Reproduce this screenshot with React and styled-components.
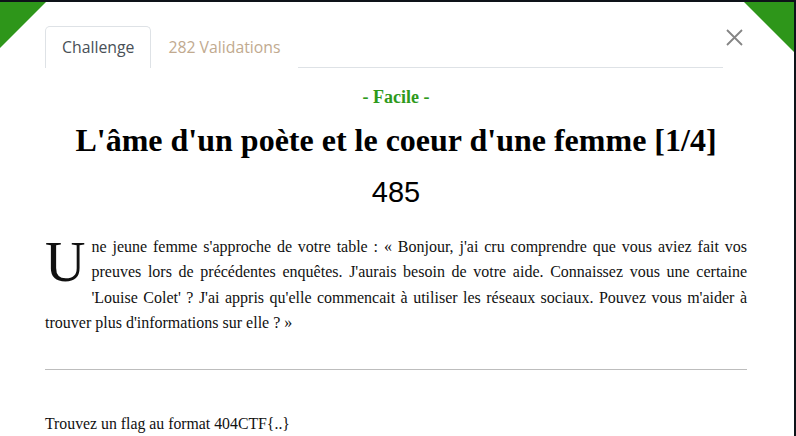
import React from "react";
import styled, { createGlobalStyle } from "styled-components";

const Global = createGlobalStyle`
  html, body { margin: 0; padding: 0; background: #0e1319; height: 436px; overflow: hidden; }
  #root { height: 436px; }
`;

const Modal = styled.div`
  position: relative;
  margin: 2px 2px 0 0;
  height: 434px;
  background: #ffffff;
  overflow: hidden;
  box-sizing: border-box;
  padding: 0 47px 0 45px;
`;

const Corner = styled.div`
  position: absolute;
  top: 0;
  ${(p) => (p.$side === "left" ? "left: 0;" : "right: 0;")}
  width: ${(p) => p.$size}px;
  height: ${(p) => p.$size}px;
  background: #2e961a;
  clip-path: ${(p) =>
    p.$side === "left"
      ? "polygon(0 0, 100% 0, 0 100%)"
      : "polygon(0 0, 100% 0, 100% 100%)"};
`;

const Header = styled.div`
  display: flex;
  align-items: flex-start;
  padding-top: 24px;
`;

const Tabs = styled.div`
  display: flex;
  width: 678px;
  border-bottom: 1px solid #dee2e6;
`;

const Tab = styled.div`
  height: 40px;
  padding: 0 16px;
  display: flex;
  align-items: center;
  font-family: "Open Sans", "DejaVu Sans", sans-serif;
  font-size: 15.8px;
  color: ${(p) => (p.$active ? "#495057" : "#c1aa8f")};
  border: 1px solid ${(p) => (p.$active ? "#dee2e6" : "transparent")};
  border-bottom: none;
  border-radius: 5px 5px 0 0;
  background: #fff;
  margin-bottom: -1px;
  padding-bottom: 1px;
`;

const Close = styled.button`
  margin: 1px 0 0 1px;
  width: 20px;
  height: 20px;
  padding: 0;
  border: none;
  background: none;
  display: flex;
  align-items: center;
  justify-content: center;
`;

const Difficulty = styled.div`
  margin-top: 19px;
  text-align: center;
  font-family: "Liberation Serif", "Times New Roman", serif;
  font-weight: bold;
  font-size: 18px;
  line-height: 20px;
  color: #2e9a1b;
`;

const Title = styled.h1`
  margin: 13px 0 0;
  text-align: center;
  font-family: "Liberation Serif", "Times New Roman", serif;
  font-weight: bold;
  font-size: 32px;
  line-height: 40px;
  color: #000;
`;

const Points = styled.div`
  margin-top: 15px;
  text-align: center;
  font-family: "Liberation Sans", Arial, sans-serif;
  font-size: 29px;
  line-height: 34px;
  color: #000;
`;

const Story = styled.p`
  margin: 25px 0 0;
  font-family: "Liberation Serif", "Times New Roman", serif;
  font-size: 16px;
  line-height: 25.3px;
  text-align: justify;
  color: #111;
`;

const DropCap = styled.span`
  float: left;
  font-size: 56px;
  line-height: 44px;
  margin: 6px 6px 4px 0;
`;

const Divider = styled.hr`
  margin: 34px 0 0;
  border: none;
  border-top: 1px solid #bdbdbd;
`;

const Hint = styled.p`
  margin: 41px 0 0;
  font-family: "Liberation Serif", "Times New Roman", serif;
  font-size: 15.8px;
  line-height: 25px;
  color: #111;
`;

export default function App() {
  return (
    <>
      <Global />
      <Modal>
        <Corner $side="left" $size={46} />
        <Corner $side="right" $size={50} />
        <Header>
          <Tabs>
            <Tab $active>Challenge</Tab>
            <Tab>282 Validations</Tab>
          </Tabs>
          <Close aria-label="Fermer">
            <svg width="17" height="17" viewBox="0 0 17 17">
              <path d="M1 1L16 16M16 1L1 16" stroke="#858585" strokeWidth="1.8" fill="none" />
            </svg>
          </Close>
        </Header>
        <Difficulty>- Facile -</Difficulty>
        <Title>L'âme d'un poète et le coeur d'une femme [1/4]</Title>
        <Points>485</Points>
        <Story>
          <DropCap>U</DropCap>
          ne jeune femme s'approche de votre table : « Bonjour, j'ai cru comprendre que vous aviez fait vos
          preuves lors de précédentes enquêtes. J'aurais besoin de votre aide. Connaissez vous une certaine
          'Louise Colet' ? J'ai appris qu'elle commencait à utiliser les réseaux sociaux. Pouvez vous m'aider à
          trouver plus d'informations sur elle ? »
        </Story>
        <Divider />
        <Hint>Trouvez un flag au format 404CTF{"{..}"}</Hint>
      </Modal>
    </>
  );
}
